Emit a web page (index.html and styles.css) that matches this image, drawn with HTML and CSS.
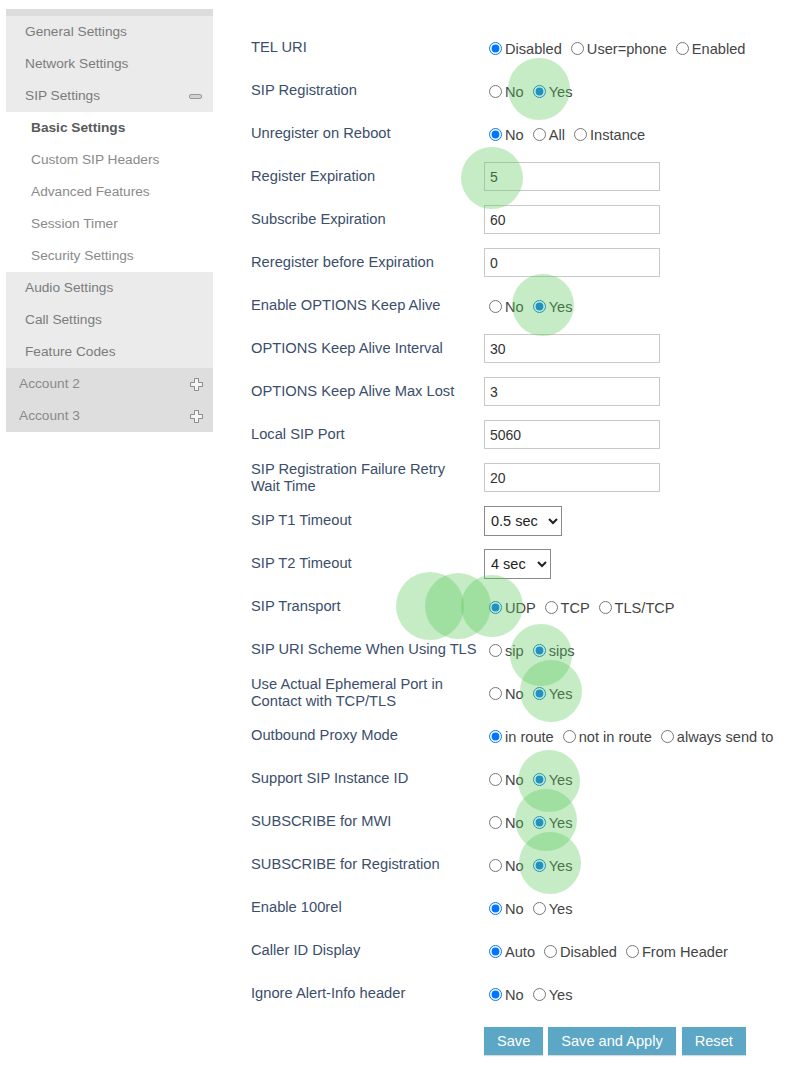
FILE: index.html
```html
<!DOCTYPE html>
<html>
<head>
<meta charset="utf-8">
<link rel="stylesheet" href="styles.css">
</head>
<body>
<div class="page">
  <nav class="sidebar">
    <div class="band"></div>
    <div class="group">
      <div class="item">General Settings</div>
      <div class="item">Network Settings</div>
      <div class="item has-icon">SIP Settings
        <svg class="ico minus" width="13" height="6" viewBox="0 0 13 6"><rect x="0.5" y="0.5" width="12" height="4" rx="1.5" fill="#d2d2d2" stroke="#9a9a9a"/></svg>
      </div>
    </div>
    <div class="sub">
      <div class="sitem active">Basic Settings</div>
      <div class="sitem">Custom SIP Headers</div>
      <div class="sitem">Advanced Features</div>
      <div class="sitem">Session Timer</div>
      <div class="sitem">Security Settings</div>
    </div>
    <div class="group">
      <div class="item">Audio Settings</div>
      <div class="item">Call Settings</div>
      <div class="item">Feature Codes</div>
    </div>
    <div class="group acc">
      <div class="aitem has-icon">Account 2
        <svg class="ico plus" width="13" height="13" viewBox="0 0 13 13"><path d="M4.5 0.5H8.5V4.5H12.5V8.5H8.5V12.5H4.5V8.5H0.5V4.5H4.5Z" fill="#f4f4f4" stroke="#8c8c8c"/></svg>
      </div>
      <div class="aitem has-icon">Account 3
        <svg class="ico plus" width="13" height="13" viewBox="0 0 13 13"><path d="M4.5 0.5H8.5V4.5H12.5V8.5H8.5V12.5H4.5V8.5H0.5V4.5H4.5Z" fill="#f4f4f4" stroke="#8c8c8c"/></svg>
      </div>
    </div>
  </nav>

  <main class="main">
    <div class="row"><div class="lbl">TEL URI</div><div class="ctl"><input type="radio" name="tel" checked>Disabled <input type="radio" name="tel">User=phone <input type="radio" name="tel">Enabled</div></div>
    <div class="row"><div class="lbl">SIP Registration</div><div class="ctl"><input type="radio" name="reg">No <input type="radio" name="reg" checked>Yes</div></div>
    <div class="row"><div class="lbl">Unregister on Reboot</div><div class="ctl"><input type="radio" name="unr" checked>No <input type="radio" name="unr">All <input type="radio" name="unr">Instance</div></div>
    <div class="row"><div class="lbl">Register Expiration</div><div class="ctl"><input class="txt" type="text" value="5"></div></div>
    <div class="row"><div class="lbl">Subscribe Expiration</div><div class="ctl"><input class="txt" type="text" value="60"></div></div>
    <div class="row"><div class="lbl">Reregister before Expiration</div><div class="ctl"><input class="txt" type="text" value="0"></div></div>
    <div class="row"><div class="lbl">Enable OPTIONS Keep Alive</div><div class="ctl"><input type="radio" name="opt">No <input type="radio" name="opt" checked>Yes</div></div>
    <div class="row"><div class="lbl">OPTIONS Keep Alive Interval</div><div class="ctl"><input class="txt" type="text" value="30"></div></div>
    <div class="row"><div class="lbl">OPTIONS Keep Alive Max Lost</div><div class="ctl"><input class="txt" type="text" value="3"></div></div>
    <div class="row"><div class="lbl">Local SIP Port</div><div class="ctl"><input class="txt" type="text" value="5060"></div></div>
    <div class="row"><div class="lbl">SIP Registration Failure Retry<br>Wait Time</div><div class="ctl"><input class="txt" type="text" value="20"></div></div>
    <div class="row"><div class="lbl">SIP T1 Timeout</div><div class="ctl"><select class="sel sel-t1"><option>0.5 sec</option></select></div></div>
    <div class="row"><div class="lbl">SIP T2 Timeout</div><div class="ctl"><select class="sel sel-t2"><option>4 sec</option></select></div></div>
    <div class="row"><div class="lbl">SIP Transport</div><div class="ctl"><input type="radio" name="tr" checked>UDP <input type="radio" name="tr">TCP <input type="radio" name="tr">TLS/TCP</div></div>
    <div class="row"><div class="lbl">SIP URI Scheme When Using TLS</div><div class="ctl"><input type="radio" name="sch">sip <input type="radio" name="sch" checked>sips</div></div>
    <div class="row"><div class="lbl">Use Actual Ephemeral Port in<br>Contact with TCP/TLS</div><div class="ctl"><input type="radio" name="eph">No <input type="radio" name="eph" checked>Yes</div></div>
    <div class="row"><div class="lbl">Outbound Proxy Mode</div><div class="ctl"><input type="radio" name="obp" checked>in route <input type="radio" name="obp">not in route <input type="radio" name="obp">always send to</div></div>
    <div class="row"><div class="lbl">Support SIP Instance ID</div><div class="ctl"><input type="radio" name="inst">No <input type="radio" name="inst" checked>Yes</div></div>
    <div class="row"><div class="lbl">SUBSCRIBE for MWI</div><div class="ctl"><input type="radio" name="mwi">No <input type="radio" name="mwi" checked>Yes</div></div>
    <div class="row"><div class="lbl">SUBSCRIBE for Registration</div><div class="ctl"><input type="radio" name="sreg">No <input type="radio" name="sreg" checked>Yes</div></div>
    <div class="row"><div class="lbl">Enable 100rel</div><div class="ctl"><input type="radio" name="rel" checked>No <input type="radio" name="rel">Yes</div></div>
    <div class="row"><div class="lbl">Caller ID Display</div><div class="ctl"><input type="radio" name="cid" checked>Auto <input type="radio" name="cid">Disabled <input type="radio" name="cid">From Header</div></div>
    <div class="row"><div class="lbl">Ignore Alert-Info header</div><div class="ctl"><input type="radio" name="ai" checked>No <input type="radio" name="ai">Yes</div></div>
    <div class="buttons">
      <button class="btn">Save</button>
      <button class="btn">Save and Apply</button>
      <button class="btn">Reset</button>
    </div>
  </main>

  <div class="touches">
    <span class="touch t1"></span>
    <span class="touch t2"></span>
    <span class="touch t3"></span>
    <span class="touch t4"></span>
    <span class="touch t5"></span>
    <span class="touch t6"></span>
    <span class="touch t7"></span>
    <span class="touch t8"></span>
    <span class="touch t9"></span>
    <span class="touch t10"></span>
    <span class="touch t11"></span>
  </div>
</div>
</body>
</html>
```

FILE: styles.css
```css
html, body {
  margin: 0;
  padding: 0;
  background: #ffffff;
}

body {
  font-family: "Liberation Sans", Arial, sans-serif;
}

.page {
  position: relative;
  display: flex;
  align-items: flex-start;
  padding-top: 9px;
  min-height: 1057px;
}

/* Sidebar */
.sidebar {
  width: 207px;
  margin-left: 6px;
  flex-shrink: 0;
  font-size: 13.7px;
}

.band {
  height: 7px;
  background: #dcdcdc;
}

.group {
  background: #ebebeb;
}

.group.acc {
  background: #dedede;
}

.item,
.sitem,
.aitem {
  height: 32px;
  line-height: 32px;
  display: flex;
  align-items: center;
  justify-content: space-between;
}

.item {
  padding-left: 19px;
  padding-right: 11px;
  color: #7c7c7c;
}

.sitem {
  padding-left: 25px;
  color: #8a8a8a;
}

.sitem.active {
  font-weight: bold;
  color: #5a5a5a;
}

.aitem {
  padding-left: 13px;
  padding-right: 10px;
  color: #8a8a8a;
}

.ico {
  display: block;
}

.minus {
  margin-top: 2px;
}

/* Main form */
.main {
  margin-left: 38px;
  padding-top: 17px;
  font-size: 14.6px;
}

.row {
  display: flex;
  align-items: center;
  height: 43px;
}

.lbl {
  width: 233px;
  flex-shrink: 0;
  line-height: 17px;
  font-size: 14.7px;
  color: #3b4e6b;
  white-space: nowrap;
}

.ctl {
  color: #444444;
  white-space: nowrap;
}

.ctl input[type="radio"] {
  margin: 3px 3px 0 5px;
  width: 13px;
  height: 13px;
  vertical-align: -1px;
}

.txt {
  box-sizing: border-box;
  width: 176px;
  height: 29px;
  border: 1px solid #c9c9c9;
  padding: 0 5px;
  font-family: "Liberation Sans", Arial, sans-serif;
  font-size: 14px;
  color: #333333;
  background: #ffffff;
  outline: none;
}

.sel {
  box-sizing: border-box;
  height: 30px;
  border: 1px solid #8a8a8a;
  border-radius: 0;
  font-family: "Liberation Sans", Arial, sans-serif;
  font-size: 14.5px;
  color: #222222;
  background: #ffffff;
  padding: 0 2px;
}

.sel-t1 {
  width: 78px;
}

.sel-t2 {
  width: 67px;
}

.buttons {
  display: flex;
  gap: 5px;
  margin-top: 12px;
  margin-left: 233px;
}

.btn {
  height: 28px;
  padding: 0 13px;
  border: none;
  background: #5ca6c6;
  color: #ffffff;
  font-family: "Liberation Sans", Arial, sans-serif;
  font-size: 14.6px;
  box-shadow: 0 1px 1px rgba(0, 0, 0, 0.15);
}

.btn + .btn + .btn {
  margin-left: 1px;
}

/* Touch highlight overlays */
.touches {
  position: absolute;
  inset: 0;
  pointer-events: none;
}

.touch {
  position: absolute;
  width: 62px;
  height: 62px;
  margin: -31px 0 0 -31px;
  border-radius: 50%;
  background: rgba(90, 200, 90, 0.35);
}

.t1 { left: 539px; top: 89px; }
.t2 { left: 492px; top: 178px; }
.t3 { left: 543px; top: 305px; }
.t4 { left: 430px; top: 606px; width: 68px; height: 68px; margin: -34px 0 0 -34px; }
.t5 { left: 458px; top: 606px; width: 66px; height: 66px; margin: -33px 0 0 -33px; }
.t6 { left: 492px; top: 606px; }
.t7 { left: 541px; top: 655px; }
.t8 { left: 551px; top: 691px; }
.t9 { left: 549px; top: 781px; }
.t10 { left: 546px; top: 820px; }
.t11 { left: 550px; top: 863px; }
```
